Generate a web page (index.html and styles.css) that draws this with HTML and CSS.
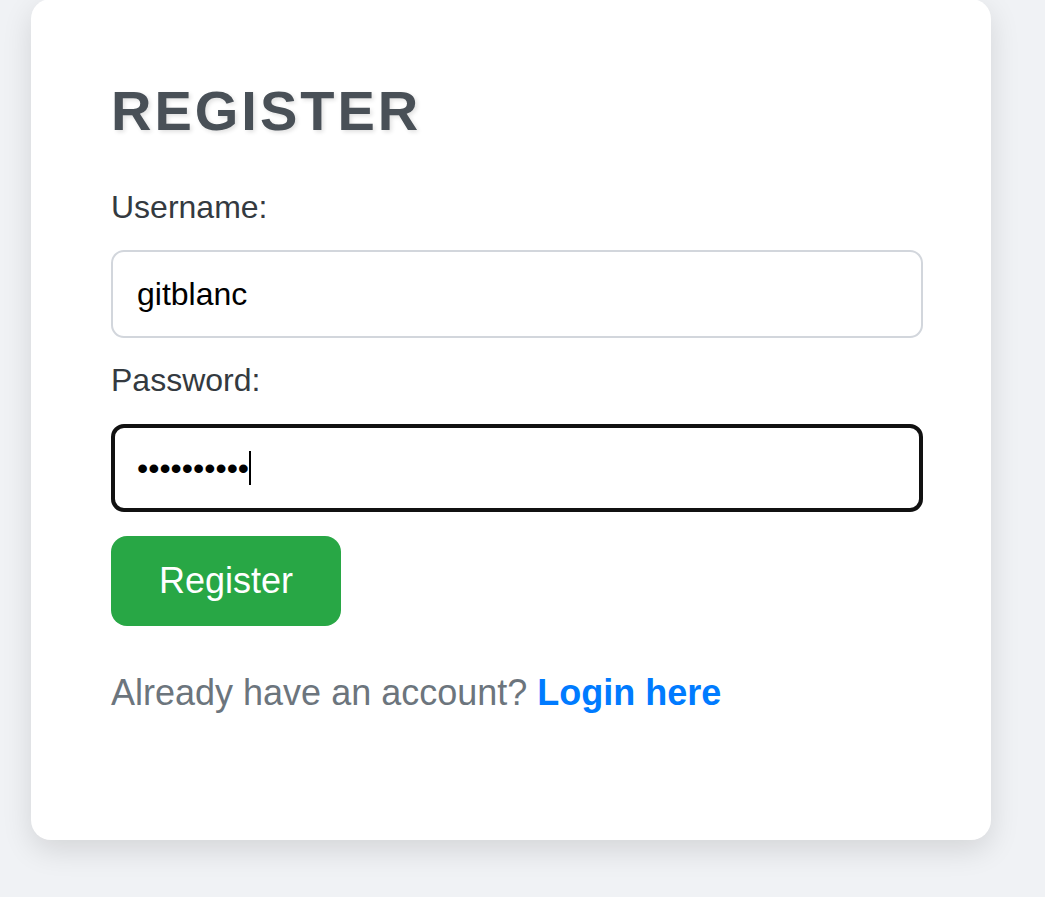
FILE: index.html
```html
<!DOCTYPE html>
<html lang="en">
<head>
<meta charset="utf-8">
<title>Register</title>
<link rel="stylesheet" href="styles.css">
</head>
<body>
  <main class="card">
    <h2 class="title">REGISTER</h2>
    <form class="form">
      <label class="label" for="username">Username:</label>
      <input class="field" id="username" type="text" value="gitblanc">
      <label class="label label-password" for="password">Password:</label>
      <div class="field field-focused" id="password" role="textbox"><span class="dots">••••••••••</span><span class="caret"></span></div>
      <button class="btn" type="button">Register</button>
    </form>
    <p class="note">Already have an account? <a class="link" href="#">Login here</a></p>
  </main>
</body>
</html>
```

FILE: styles.css
```css
html, body {
  margin: 0;
  padding: 0;
}

body {
  background: #f0f2f5;
  font-family: "Liberation Sans", Arial, sans-serif;
  height: 897px;
  overflow: hidden;
}

.card {
  box-sizing: border-box;
  width: 960px;
  margin: -1px 0 0 31px;
  padding: 80px 68px 80px 80px;
  background: #ffffff;
  border-radius: 20px;
  box-shadow: 0 10px 30px rgba(0, 0, 0, 0.12);
}

.title {
  margin: 0 0 46px;
  font-size: 56px;
  line-height: 64px;
  font-weight: 700;
  letter-spacing: 3px;
  color: #495057;
  text-shadow: 2px 2px 4px rgba(0, 0, 0, 0.12);
}

.form {
  margin: 0;
}

.label {
  display: block;
  margin: 0 0 24px;
  font-size: 32px;
  line-height: 37px;
  color: #343a40;
}

.label-password {
  margin-bottom: 25px;
}

.field {
  display: block;
  box-sizing: border-box;
  width: 100%;
  height: 88px;
  margin: 0 0 24px;
  padding: 0 24px;
  border: 2px solid #d2d6dc;
  border-radius: 13px;
  background: #ffffff;
  font-family: "Liberation Sans", Arial, sans-serif;
  font-size: 32px;
  color: #000000;
  outline: none;
}

.field-focused {
  display: flex;
  align-items: center;
  border: 4px solid #111111;
  padding: 0 22px;
  margin-bottom: 0;
}

.dots {
  font-size: 32px;
  line-height: 1;
  letter-spacing: 0;
}

.caret {
  display: inline-block;
  width: 2px;
  height: 34px;
  background: #000000;
}

.btn {
  display: inline-block;
  margin-top: 24px;
  height: 90px;
  padding: 0 48px;
  border: none;
  border-radius: 16px;
  background: #28a745;
  color: #ffffff;
  font-family: "Liberation Sans", Arial, sans-serif;
  font-size: 36px;
  line-height: 42px;
  cursor: pointer;
}

.note {
  margin: 46px 0 46px;
  font-size: 36px;
  line-height: 42px;
  color: #6c757d;
}

.link {
  color: #007bff;
  font-weight: 700;
  text-decoration: none;
}
```
